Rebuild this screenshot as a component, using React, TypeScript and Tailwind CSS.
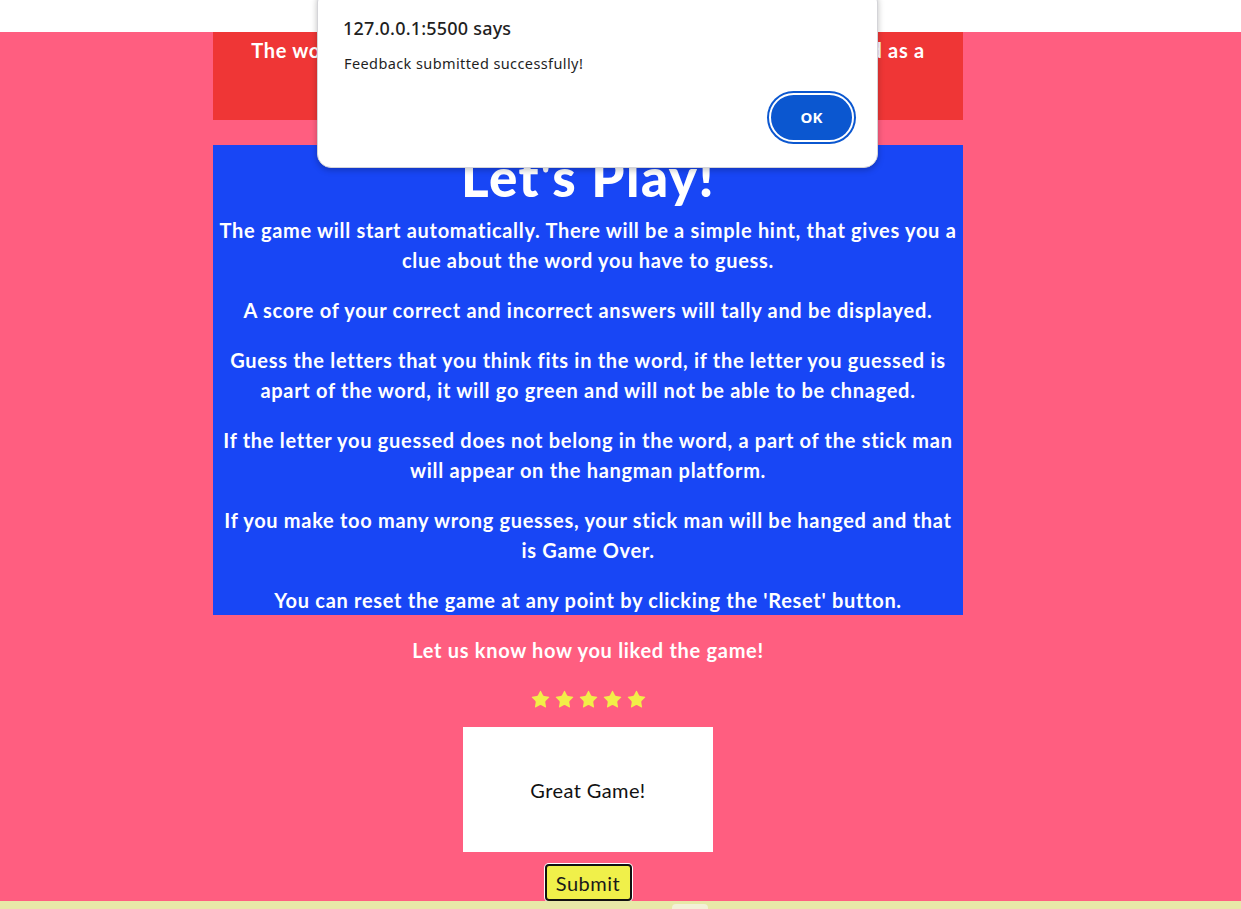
import {Star} from 'lucide-react';

const rules: string[][] = [
    ['The game will start automatically. There will be a simple hint, that gives you a', 'clue about the word you have to guess.'],
    ['A score of your correct and incorrect answers will tally and be displayed.'],
    ['Guess the letters that you think fits in the word, if the letter you guessed is', 'apart of the word, it will go green and will not be able to be chnaged.'],
    ['If the letter you guessed does not belong in the word, a part of the stick man', 'will appear on the hangman platform.'],
    ['If you make too many wrong guesses, your stick man will be hanged and that', 'is Game Over.'],
    ["You can reset the game at any point by clicking the 'Reset' button."],
];

function AlertDialog() {
    return (
        <div
            className="absolute left-[317px] top-[-12px] w-[561px] h-[180px] bg-white rounded-[14px] border border-[#d4d4d8] shadow-[0_2px_6px_rgba(0,0,0,0.25)] font-['Noto_Sans',sans-serif]">
            <div className="pt-[26px] pl-[25px] text-[18px] font-medium text-[#1f1f1f] leading-[26px] tracking-[0.2px]">
                127.0.0.1:5500 says
            </div>
            <div className="pt-[12px] pl-[26px] text-[14.5px] text-[#1f1f1f] leading-[20px] tracking-[0.4px]">
                Feedback submitted successfully!
            </div>
            <div className="flex justify-end pr-[23px] pt-[20px]">
                <button
                    className="w-[85px] h-[49px] rounded-full bg-[#0b57d0] border-2 border-white ring-2 ring-[#0b57d0] text-white text-[15px] font-bold">
                    OK
                </button>
            </div>
        </div>
    );
}

export default function App() {
    return (
        <div className="relative w-[1241px] h-[909px] overflow-hidden bg-white flex flex-col font-['Lato',sans-serif]">
            <div className="h-8 shrink-0 bg-white"/>

            <main className="h-[869px] shrink-0 bg-[#ff5e80] text-white">
                <div className="ml-[213px] w-[750px] flex flex-col items-center">
                    {/* intro box */}
                    <section className="w-full h-[88px] bg-[#ef3636] pt-[3px] text-center text-[20px] font-bold leading-[30px] tracking-[0.7px]">
                        The word you need to guess is hidden and every letter is displayed as a
                        <br/>
                        blank space on the board.
                    </section>

                    {/* rules */}
                    <section className="w-full h-[470px] mt-[25px] bg-[#1846f5] text-center">
                        <h1 className="pt-[8px] text-[53px] font-black leading-[48px] tracking-[1.5px]">Let's Play!</h1>
                        <div className="mt-[14px] flex flex-col gap-[20px] text-[20px] font-bold leading-[30px] tracking-[0.7px]">
                            {rules.map((lines, i) => (
                                <p key={i}>
                                    {lines.map((l, j) => (
                                        <span key={j} className="block whitespace-nowrap">{l}</span>
                                    ))}
                                </p>
                            ))}
                        </div>
                    </section>

                    {/* feedback */}
                    <p className="mt-[20px] text-[20px] font-bold leading-[30px] tracking-[0.7px]">Let us know how you liked the game!</p>
                    <div className="mt-[20px] h-[28px] flex items-center gap-[3px]">
                        {[0, 1, 2, 3, 4].map(i => (
                            <Star key={i} size={21} strokeWidth={0} fill="#f2ee48"/>
                        ))}
                    </div>
                    <div
                        className="mt-[14px] w-[250px] h-[125px] bg-white flex items-center justify-center text-[#111] text-[20px] tracking-[0.4px]">
                        Great Game!
                    </div>
                    <button
                        className="mt-[12px] w-[87px] h-[37px] bg-[#f0f04a] border-2 border-[#111] rounded-[4px] ring-1 ring-white text-[#1a1a1a] text-[20px] leading-none tracking-[0.5px]">
                        Submit
                    </button>
                </div>
            </main>

            <div className="flex-1 bg-[#e8e8a8] relative">
                <div className="absolute left-[672px] top-[3px] w-[36px] h-[6px] rounded-t bg-[#f3f1d8]"/>
            </div>

            <AlertDialog/>
        </div>
    );
}
